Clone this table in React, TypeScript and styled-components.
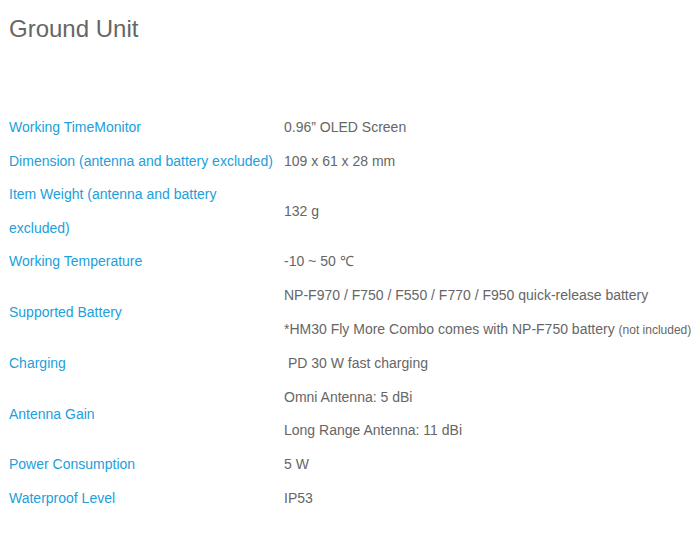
import React from 'react';
import styled, { createGlobalStyle } from 'styled-components';

const GlobalStyle = createGlobalStyle`
  html, body {
    margin: 0;
    padding: 0;
    background: #fff;
  }
  body {
    font-family: "Liberation Sans", Arial, sans-serif;
  }
`;

const Page = styled.main`
  padding: 15px 0 0 9px;
`;

const Title = styled.h1`
  margin: 0;
  font-size: 24px;
  line-height: 28px;
  font-weight: normal;
  color: #666;
`;

const SpecTable = styled.div`
  margin-top: 68px;
  display: grid;
  grid-template-columns: 275px auto;
  font-size: 14px;
  line-height: 33.6px;
`;

const Label = styled.div`
  display: flex;
  align-items: center;
  color: #20a0dc;
  padding-right: 4px;
`;

const Value = styled.div`
  display: flex;
  flex-direction: column;
  justify-content: center;
  color: #666;
  white-space: nowrap;
`;

const Line = styled.p`
  margin: 0;
`;

const Small = styled.span`
  font-size: 12px;
`;

interface ISpecRow {
  label: string;
  values: React.ReactNode[];
}

const specs: ISpecRow[] = [
  { label: 'Working TimeMonitor', values: ['0.96” OLED Screen'] },
  { label: 'Dimension (antenna and battery excluded)', values: ['109 x 61 x 28 mm'] },
  { label: 'Item Weight (antenna and battery excluded)', values: ['132 g'] },
  { label: 'Working Temperature', values: ['-10 ~ 50 ℃'] },
  {
    label: 'Supported Battery',
    values: [
      'NP-F970 / F750 / F550 / F770 / F950 quick-release battery',
      <>*HM30 Fly More Combo comes with NP-F750 battery <Small>(not included)</Small></>,
    ],
  },
  { label: 'Charging', values: ['\u00a0PD 30 W fast charging'] },
  { label: 'Antenna Gain', values: ['Omni Antenna: 5 dBi', 'Long Range Antenna: 11 dBi'] },
  { label: 'Power Consumption', values: ['5 W'] },
  { label: 'Waterproof Level', values: ['IP53'] },
];

const App = () => {
  return (
    <>
      <GlobalStyle />
      <Page>
        <Title>Ground Unit</Title>
        <SpecTable>
          {specs.map(spec => (
            <React.Fragment key={spec.label}>
              <Label>{spec.label}</Label>
              <Value>
                {spec.values.map((v, i) => (
                  <Line key={i}>{v}</Line>
                ))}
              </Value>
            </React.Fragment>
          ))}
        </SpecTable>
      </Page>
    </>
  );
};

export default App;
